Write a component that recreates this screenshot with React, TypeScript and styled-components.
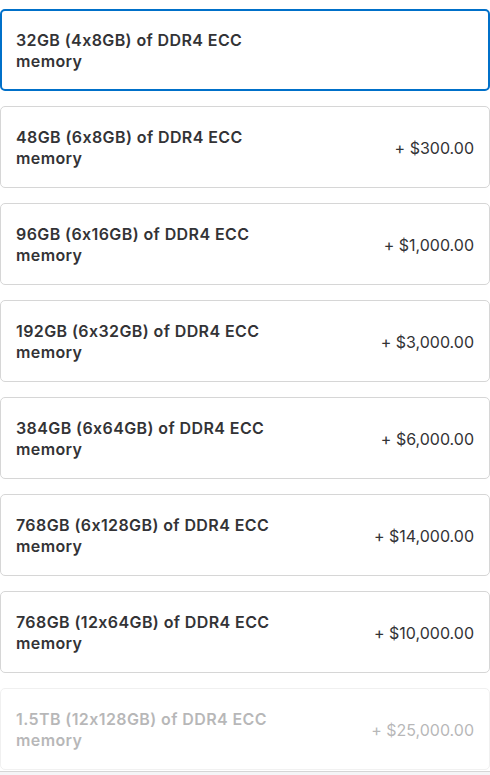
import React, { useState } from "react";
import styled, { createGlobalStyle } from "styled-components";

const GlobalStyle = createGlobalStyle`
  html, body {
    margin: 0;
    padding: 0;
    background: #fff;
    font-family: Inter, "Noto Sans", "Liberation Sans", sans-serif;
    font-feature-settings: "calt" 0;
    -webkit-font-smoothing: antialiased;
  }
`;

interface Option {
  id: string;
  label: string;
  price?: string;
  disabled?: boolean;
}

const options: Option[] = [
  { id: "32", label: "32GB (4x8GB) of DDR4 ECC memory" },
  { id: "48", label: "48GB (6x8GB) of DDR4 ECC memory", price: "+ $300.00" },
  { id: "96", label: "96GB (6x16GB) of DDR4 ECC memory", price: "+ $1,000.00" },
  { id: "192", label: "192GB (6x32GB) of DDR4 ECC memory", price: "+ $3,000.00" },
  { id: "384", label: "384GB (6x64GB) of DDR4 ECC memory", price: "+ $6,000.00" },
  { id: "768a", label: "768GB (6x128GB) of DDR4 ECC memory", price: "+ $14,000.00" },
  { id: "768b", label: "768GB (12x64GB) of DDR4 ECC memory", price: "+ $10,000.00" },
  { id: "1536", label: "1.5TB (12x128GB) of DDR4 ECC memory", price: "+ $25,000.00", disabled: true },
];

const App = () => {
  const [selected, setSelected] = useState<string>("32");

  return (
    <>
      <GlobalStyle />
      <List>
        {options.map((o) => (
          <Card
            key={o.id}
            $selected={selected === o.id}
            $disabled={!!o.disabled}
            onClick={() => !o.disabled && setSelected(o.id)}
          >
            <Title>{o.label}</Title>
            {o.price && <Price>{o.price}</Price>}
          </Card>
        ))}
      </List>
      <Footer />
    </>
  );
};

export default App;

const List = styled.div`
  display: flex;
  flex-direction: column;
  gap: 15px;
  padding-top: 9px;
`;

const Card = styled.div<{ $selected: boolean; $disabled: boolean }>`
  box-sizing: border-box;
  height: 82px;
  display: flex;
  align-items: center;
  justify-content: space-between;
  padding: ${(p) => (p.$selected ? "2px 14px 0" : "2px 15px 0")};
  border: ${(p) => (p.$selected ? "2px solid #0070c9" : "1px solid #d6d6d6")};
  border-radius: 5px;
  color: #333336;
  cursor: ${(p) => (p.$disabled ? "default" : "pointer")};
  opacity: ${(p) => (p.$disabled ? 0.35 : 1)};
`;

const Title = styled.div`
  width: 290px;
  font-size: 16px;
  font-weight: 600;
  line-height: 21px;
  letter-spacing: 0.4px;
`;

const Price = styled.div`
  font-size: 16px;
  font-weight: 400;
  line-height: 21px;
  white-space: nowrap;
`;

const Footer = styled.div`
  margin-top: 1px;
  height: 60px;
  border-top: 1px solid #d6d6d6;
  background: #f5f5f7;
`;
